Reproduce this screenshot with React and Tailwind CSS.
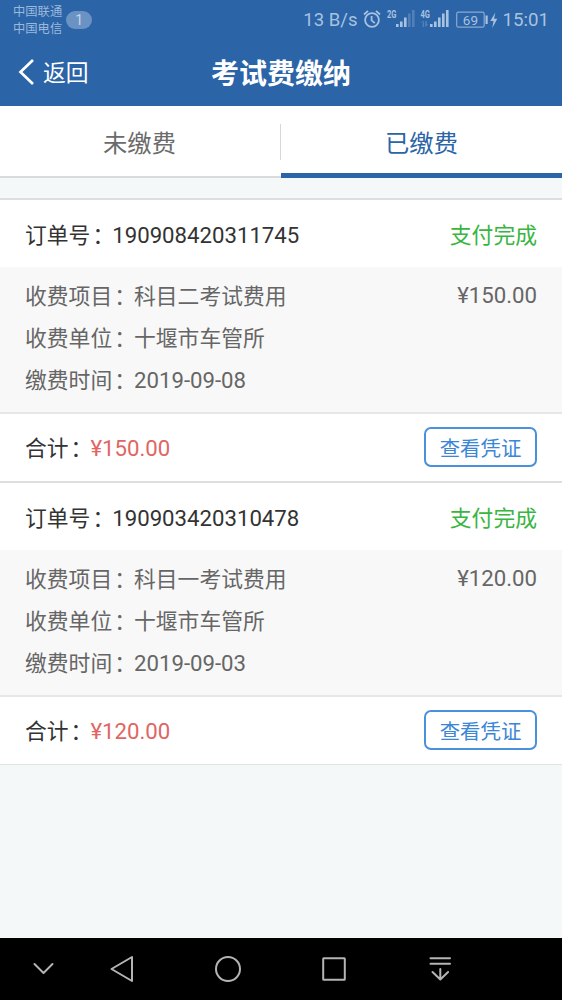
import React from "react";

const orders = [
  {
    id: "190908420311745",
    status: "支付完成",
    item: "科目二考试费用",
    unit: "十堰市车管所",
    date: "2019-09-08",
    amount: "¥150.00",
  },
  {
    id: "190903420310478",
    status: "支付完成",
    item: "科目一考试费用",
    unit: "十堰市车管所",
    date: "2019-09-03",
    amount: "¥120.00",
  },
];

function StatusBar() {
  return (
    <div className="flex h-[39px] items-center pl-[13px] pr-[13px] text-[#a8c2e0]">
      <div className="pt-[2px] text-[12.3px] leading-[17px] text-[#9bb8da]">
        <p>中国联通</p>
        <p>中国电信</p>
      </div>
      <span className="ml-[4px] flex h-[18px] w-[26px] items-center justify-center rounded-full bg-[#6a93c4] text-[14px] leading-none text-[#c3d5ea]">
        1
      </span>

      <div className="ml-auto flex items-center">
        <span className="text-[18.5px] leading-6">13 B/s</span>

        {/* Alarm, signal bars, battery and charging bolt */}
        <svg className="ml-[6px] shrink-0" width="136" height="24" viewBox="0 0 136 24" fill="none">
          <g stroke="currentColor" strokeWidth="1.8">
            <circle cx="9" cy="12" r="6.9" />
            <path d="M8.6 8v4.4l3.2 2.7M1 6.5l4-3.6M17 6.5l-4-3.6" />
          </g>
          <g fill="currentColor" fontFamily="Roboto" fontSize="10" fontWeight="700">
            <text x="24" y="9.6" textLength="9.5" lengthAdjust="spacingAndGlyphs">2G</text>
            <text x="57.5" y="9.6" textLength="9.5" lengthAdjust="spacingAndGlyphs">4G</text>
          </g>
          <g fill="currentColor">
            <rect x="33" y="16" width="2.6" height="3" />
            <rect x="37" y="13.5" width="2.6" height="5.5" />
            <rect x="41" y="9.5" width="2.6" height="9.5" />
            <rect x="45" y="5.5" width="2.6" height="13.5" opacity="0.3" />
            <rect x="49" y="2" width="2.6" height="17" opacity="0.3" />
            <rect x="67" y="16" width="2.6" height="3" />
            <rect x="71" y="13.5" width="2.6" height="5.5" />
            <rect x="75" y="9.5" width="2.6" height="9.5" />
            <rect x="79" y="5.5" width="2.6" height="13.5" />
            <rect x="83" y="2" width="2.6" height="17" />
            <path d="M57.5 15l2.2-2.2V19h1.2v-6zM62.3 13v6l2.8-2.6-1.4-.2V13z" opacity="0.35" />
            <rect x="122.5" y="7.5" width="2.2" height="8.5" />
            <path d="M132.3 4.5l-5 8.5h3.2l-1.2 7 5-9.2h-3.2z" />
          </g>
          <rect x="93.7" y="4.2" width="27.5" height="15" rx="1.8" stroke="currentColor" strokeOpacity="0.75" strokeWidth="1.2" />
          <text x="107.4" y="16.6" textAnchor="middle" fill="currentColor" fontFamily="Roboto" fontSize="13.5">
            69
          </text>
        </svg>

        <span className="ml-[3px] text-[18.7px] leading-6">15:01</span>
      </div>
    </div>
  );
}

function Header() {
  return (
    <div className="grid h-[67px] grid-cols-3 items-center text-white">
      <button className="flex items-center pl-[18px] text-left text-[22.8px] leading-8">
        <svg className="mr-[8px]" width="17" height="28" viewBox="0 0 17 28" fill="none">
          <path d="M15 1L2.5 13 15 25" stroke="white" strokeWidth="2.7" />
        </svg>
        <span className="pt-[2px]">返回</span>
      </button>
      <h1 className="pt-[4px] text-center text-[28px] font-bold leading-8">考试费缴纳</h1>
    </div>
  );
}

function Tabs() {
  return (
    <div className="flex h-[72px] bg-white text-[24.3px]">
      <button className="flex w-[281px] items-center justify-center border-b-2 border-[#d9dbdb] pt-[7px] pr-[2px] text-[#6b6b6b]">
        未缴费
      </button>
      <span className="mt-[18px] -ml-px h-[36px] w-px bg-[#d8d8d8]" />
      <button className="flex flex-1 items-center justify-center border-b-[5px] border-[#2b64a7] pt-[10px] text-[#2b64a7]">
        已缴费
      </button>
    </div>
  );
}

// The full-width colon sits too far left in its box, so nudge it toward the value
function Label({ children }) {
  return (
    <span>
      {children}
      <span className="pl-[2px] tracking-[-2px]">：</span>
    </span>
  );
}

function OrderCard({ order }) {
  return (
    <div className="border-b-2 border-[#dedede] bg-white last:border-b last:border-[#e2e4e4]">
      <div className="flex h-[67px] items-center justify-between px-[25px] pt-[4px]">
        <p className="text-[#333]">
          <Label>订单号</Label>
          <span className="text-[22.2px]">{order.id}</span>
        </p>
        <p className="pt-px text-[#39b541]">{order.status}</p>
      </div>

      <div className="flex h-[147px] justify-between border-b-2 border-[#e7e7e7] bg-[#f8f8f8] px-[25px] pt-[8px] leading-[42px] text-[#666]">
        <div className="pt-px">
          <p>
            <Label>收费项目</Label>
            {order.item}
          </p>
          <p>
            <Label>收费单位</Label>
            {order.unit}
          </p>
          <p className="leading-[41px]">
            <Label>缴费时间</Label>
            <span className="text-[22.2px]">{order.date}</span>
          </p>
        </div>
        <p className="text-[22.2px] leading-[41px]">{order.amount}</p>
      </div>

      {/* Total */}
      <div className="flex h-[67px] items-center justify-between px-[25px]">
        <p className="pt-[3px] text-[#333]">
          <Label>合计</Label>
          <span className="text-[22.2px] text-[#e06663]">{order.amount}</span>
        </p>
        <button className="mb-px h-[40px] w-[113px] rounded-[7px] border-2 border-[#4a90db] pt-[4px] text-[20.4px] leading-none text-[#3b86d6]">
          查看凭证
        </button>
      </div>
    </div>
  );
}

function NavBar() {
  return (
    <div className="h-[62px] bg-black">
      <svg width="562" height="62" viewBox="0 0 562 62" fill="none" stroke="#b4b4b4" strokeWidth="2" strokeLinejoin="round" strokeLinecap="round">
        <path d="M34.5 26l9 9 9-9" />
        <path d="M111.5 31L132 19v24z" />
        <circle cx="228" cy="31" r="12" />
        <rect x="323.2" y="20.2" width="21.6" height="21.6" rx="0.5" />
        <path d="M430.5 20.3h19.5M430.5 25.7h19.5M440.3 31v10M432.5 34l7.8 7.5 7.8-7.5" />
      </svg>
    </div>
  );
}

export default function App() {
  return (
    <div className="flex h-[1000px] w-[562px] flex-col overflow-hidden bg-[#f4f8f9] font-[Roboto,'Noto_Sans_CJK_SC',sans-serif] text-[21.8px]">
      <div className="bg-[#2b64a7]">
        <StatusBar />
        <Header />
      </div>
      <Tabs />

      <div className="mt-[20px] flex-1">
        <div className="border-t-2 border-[#dedede]">
          {orders.map((order) => (
            <OrderCard key={order.id} order={order} />
          ))}
        </div>
      </div>

      <NavBar />
    </div>
  );
}
